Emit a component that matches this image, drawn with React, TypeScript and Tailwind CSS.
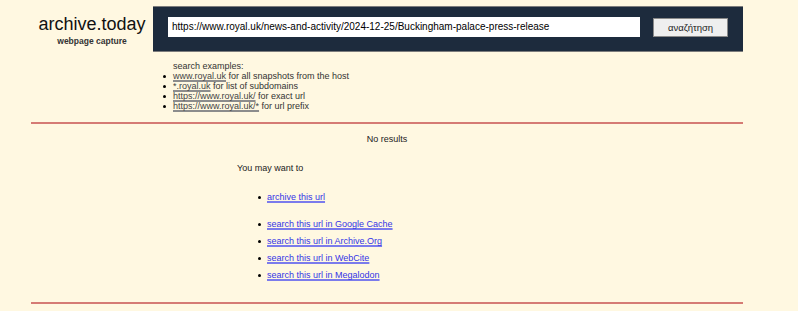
const examples = [
  { link: "www.royal.uk", rest: " for all snapshots from the host" },
  { link: "*.royal.uk", rest: " for list of subdomains" },
  { link: "https://www.royal.uk/", rest: " for exact url" },
  { link: "https://www.royal.uk/*", rest: " for url prefix" },
];

const searches = [
  "search this url in Google Cache",
  "search this url in Archive.Org",
  "search this url in WebCite",
  "search this url in Megalodon",
];

function Dot() {
  return <span className="mr-[6px] h-[3px] w-[3px] shrink-0 rounded-full bg-black" />;
}

function Link({ text }: { text: string }) {
  return (
    <a
      href="#"
      className="text-[#3434e6] underline decoration-[#7b7bec] decoration-[1.5px] underline-offset-[1px] [text-decoration-skip-ink:none]"
    >
      {text}
    </a>
  );
}

export default function App() {
  return (
    <div className="min-h-screen bg-[#fff8e1] font-['Liberation_Sans',Arial,sans-serif] text-[9px] leading-[10px] text-[#222]">
      <div className="ml-[31px] w-[712px] pt-[6px]">
        <header className="flex">
          <div className="flex w-[122px] flex-col items-center pt-[8px]">
            <div className="text-[18px] leading-[20px] text-[#111]">archive.today</div>
            <div className="mt-[2px] text-[8.5px] font-bold leading-[10px] text-[#333]">webpage capture</div>
          </div>
          <div className="flex h-[46px] flex-1 items-start gap-[13px] border-y border-[#7c7c7c] bg-[#1d2b3d] pl-[15px] pt-[10px]">
            <div className="flex h-[20px] w-[472px] items-center bg-white pl-[4px] text-[10px] text-black">
              https://www.royal.uk/news-and-activity/2024-12-25/Buckingham-palace-press-release
            </div>
            <button className="mt-[1px] flex h-[19px] w-[75px] items-center justify-center border border-[#8a8a8a] bg-[#efefef] text-[9.5px] text-[#222]">
              αναζήτηση
            </button>
          </div>
        </header>

        <div className="ml-[131px] mt-[9px]">
          <div className="pl-[11px] text-[#333]">search examples:</div>
          {examples.map((e) => (
            <div key={e.link} className="flex items-center">
              <span className="ml-[1px] mr-[7px] h-[3px] w-[3px] shrink-0 rounded-full bg-black" />
              <span className="text-[#333]">
                <a
                  href="#"
                  className="text-[#444] underline decoration-[#8c8c8c] decoration-[1.5px] underline-offset-[1px] [text-decoration-skip-ink:none]"
                >
                  {e.link}
                </a>
                {e.rest}
              </span>
            </div>
          ))}
        </div>

        <div className="mt-[11px] h-[2px] bg-[#d57b74]" />

        <div className="mt-[10px] text-center text-[#222]">No results</div>

        <div className="ml-[206px] mt-[19px] text-[#222]">You may want to</div>

        <div className="ml-[227px] mt-[19px]">
          <div className="flex items-center">
            <Dot />
            <Link text="archive this url" />
          </div>
          <div className="mt-[17px] flex flex-col gap-[7px]">
            {searches.map((s) => (
              <div key={s} className="flex items-center">
                <Dot />
                <Link text={s} />
              </div>
            ))}
          </div>
        </div>

        <div className="mt-[22px] h-[2px] bg-[#d57b74]" />
      </div>
    </div>
  );
}
